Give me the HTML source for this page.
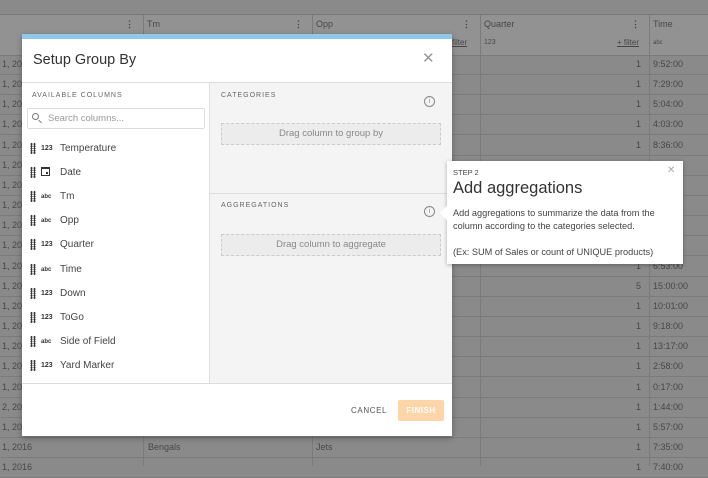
<!DOCTYPE html>
<html><head><style>
*{box-sizing:border-box;margin:0;padding:0}
body{width:708px;height:466px;overflow:hidden;background:#8a8a8a;font-family:"Liberation Sans",sans-serif;position:relative;color:#333}
.bg{position:absolute;font-size:9px;color:#474747}
.hline{position:absolute;left:0;width:708px;height:1px;background:#7b7b7b}
.vline{position:absolute;width:1px;background:#7b7b7b}
.dlg{position:absolute;left:22px;top:34px;width:430px;height:402px;background:#fff;box-shadow:0 2px 6px rgba(0,0,0,.3)}
.top{height:5px;background:#8ec8ea}
.title{position:absolute;left:11px;top:18px;font-size:14.5px;color:#333}
.x{position:absolute;font-size:15px;color:#999;font-weight:100}
.lbl{position:absolute;font-size:7px;letter-spacing:1px;color:#666}
.item{position:absolute;left:8px;font-size:10px;color:#444;display:flex;align-items:center}
.grip{width:6px;height:11px;background-image:radial-gradient(circle,#333 0.9px,transparent 1.1px);background-size:3px 2.2px;margin-right:5px}
.t{font-size:7px;font-weight:bold;width:19px;color:#333}
.drop{position:absolute;left:11px;width:220px;height:22px;border:1px dashed #ccc;background:#ececec;font-size:9.5px;color:#888;text-align:center;line-height:20px}
.info{position:absolute;width:11px;height:11px;border:1px solid #888;border-radius:50%;font-size:7px;color:#888;text-align:center;line-height:9px}
</style></head><body>
<div class="hline" style="top:14px;background:#777"></div>
<div style="position:absolute;left:0;top:15px;width:708px;height:40px;background:#929292"></div>
<div class="hline" style="top:55px"></div>
<div class="bg" style="left:147px;top:19px">Tm</div>
<div class="bg" style="left:316px;top:19px">Opp</div>
<div class="bg" style="left:484px;top:19px">Quarter</div>
<div class="bg" style="left:653px;top:19px">Time</div>
<div class="bg" style="left:484px;top:39px;font-size:7px">123</div>
<div class="bg" style="left:653px;top:40px;font-size:6px">abc</div>
<div class="bg" style="left:617px;top:38px;text-decoration:underline;font-size:8px">+ filter</div>
<div class="bg" style="left:452px;top:38px;text-decoration:underline;font-size:8px">filter</div>
<div class="bg" style="left:125px;top:19px;font-weight:bold">⋮</div>
<div class="bg" style="left:294px;top:19px;font-weight:bold">⋮</div>
<div class="bg" style="left:462px;top:19px;font-weight:bold">⋮</div>
<div class="bg" style="left:631px;top:19px;font-weight:bold">⋮</div>
<div class="vline" style="left:143px;top:15px;height:451px"></div>
<div class="vline" style="left:312px;top:15px;height:451px"></div>
<div class="vline" style="left:480px;top:15px;height:451px"></div>
<div class="vline" style="left:649px;top:15px;height:451px"></div>
<div id="rows"></div>
<script>
var t=["9:52:00","7:29:00","5:04:00","4:03:00","8:36:00","","","","","","6:53:00","15:00:00","10:01:00","9:18:00","13:17:00","2:58:00","0:17:00","1:44:00","5:57:00","7:35:00","7:40:00"];
var q=[1,1,1,1,1,1,1,1,1,1,1,5,1,1,1,1,1,1,1,1,1];
var h="";
for(var i=0;i<21;i++){var y=Math.round(64+i*20.16);
h+='<div class="hline" style="top:'+(y+10)+'px"></div>';
h+='<div class="bg" style="left:2px;top:'+(y-5)+'px">'+(i==17?'2, 2016':'1, 2016')+'</div>';
h+='<div class="bg" style="left:636px;top:'+(y-5)+'px">'+q[i]+'</div>';
h+='<div class="bg" style="left:653px;top:'+(y-5)+'px">'+t[i]+'</div>';}
h+='<div class="bg" style="left:148px;top:442px">Bengals</div><div class="bg" style="left:316px;top:442px">Jets</div>';
document.getElementById('rows').innerHTML=h;
</script>
<div class="dlg">
<div class="top"></div>
<div class="title">Setup Group By</div>
<div class="x" style="left:400px;top:15px">✕</div>
<div style="position:absolute;left:0;top:48px;width:430px;height:1px;background:#ddd"></div>
<div style="position:absolute;left:187px;top:49px;width:243px;height:300px;background:#f4f4f4;border-left:1px solid #ddd"></div>
<div style="position:absolute;left:188px;top:159px;width:242px;height:1px;background:#ddd"></div>
<div style="position:absolute;left:0;top:349px;width:430px;height:1px;background:#ddd"></div>
<div class="lbl" style="left:10px;top:58px">AVAILABLE COLUMNS</div>
<div style="position:absolute;left:5px;top:74px;width:178px;height:21px;border:1px solid #ddd;border-radius:2px;font-size:9.5px;color:#999;line-height:19px;padding-left:20px">Search columns...</div>
<div style="position:absolute;left:10px;top:79px;width:7px;height:7px;border:1.2px solid #777;border-radius:50%"></div>
<div style="position:absolute;left:16px;top:87px;width:4px;height:1.3px;background:#777;transform:rotate(45deg)"></div>
<div class="item" style="top:109px"><span class="grip"></span><span class="t">123</span>Temperature</div>
<div class="item" style="top:133px"><span class="grip"></span><span class="t"><span style="display:inline-block;width:9px;height:9px;border:1.5px solid #333;border-top-width:2.5px;position:relative"><span style="position:absolute;right:1px;bottom:1px;width:2px;height:2px;background:#333"></span></span></span>Date</div>
<div class="item" style="top:157px"><span class="grip"></span><span class="t" style="font-size:6px">abc</span>Tm</div>
<div class="item" style="top:181px"><span class="grip"></span><span class="t" style="font-size:6px">abc</span>Opp</div>
<div class="item" style="top:205px"><span class="grip"></span><span class="t">123</span>Quarter</div>
<div class="item" style="top:230px"><span class="grip"></span><span class="t" style="font-size:6px">abc</span>Time</div>
<div class="item" style="top:254px"><span class="grip"></span><span class="t">123</span>Down</div>
<div class="item" style="top:278px"><span class="grip"></span><span class="t">123</span>ToGo</div>
<div class="item" style="top:302px"><span class="grip"></span><span class="t" style="font-size:6px">abc</span>Side of Field</div>
<div class="item" style="top:326px"><span class="grip"></span><span class="t">123</span>Yard Marker</div>
<div class="lbl" style="left:199px;top:58px">CATEGORIES</div>
<div class="info" style="left:402px;top:62px">i</div>
<div class="drop" style="left:199px;top:89px">Drag column to group by</div>
<div class="lbl" style="left:199px;top:168px">AGGREGATIONS</div>
<div class="info" style="left:402px;top:172px">i</div>
<div class="drop" style="left:199px;top:200px">Drag column to aggregate</div>
<div style="position:absolute;left:329px;top:372px;font-size:8px;letter-spacing:.6px;color:#555">CANCEL</div>
<div style="position:absolute;left:376px;top:366px;width:46px;height:21px;background:#fdd5a8;border-radius:2px;color:#fff;font-size:8px;font-weight:bold;text-align:center;line-height:21px;letter-spacing:.5px">FINISH</div>
</div>
<div style="position:absolute;left:447px;top:161px;width:236px;height:103px;background:#fff;box-shadow:0 1px 4px rgba(0,0,0,.3)">
<div style="position:absolute;left:-5px;top:47px;width:10px;height:10px;background:#fff;transform:rotate(45deg)"></div>
<div style="position:absolute;left:6px;top:7px;font-size:7.5px;color:#444">STEP 2</div>
<div style="position:absolute;left:220px;top:4px;font-size:10px;color:#aaa">✕</div>
<div style="position:absolute;left:6px;top:18px;font-size:16.5px;color:#333">Add aggregations</div>
<div style="position:absolute;left:6px;top:46px;width:230px;font-size:9.2px;line-height:13px;color:#444">Add aggregations to summarize the data from the column according to the categories selected.<br><br>(Ex: SUM of Sales or count of UNIQUE products)</div>
</div>
</body></html>
